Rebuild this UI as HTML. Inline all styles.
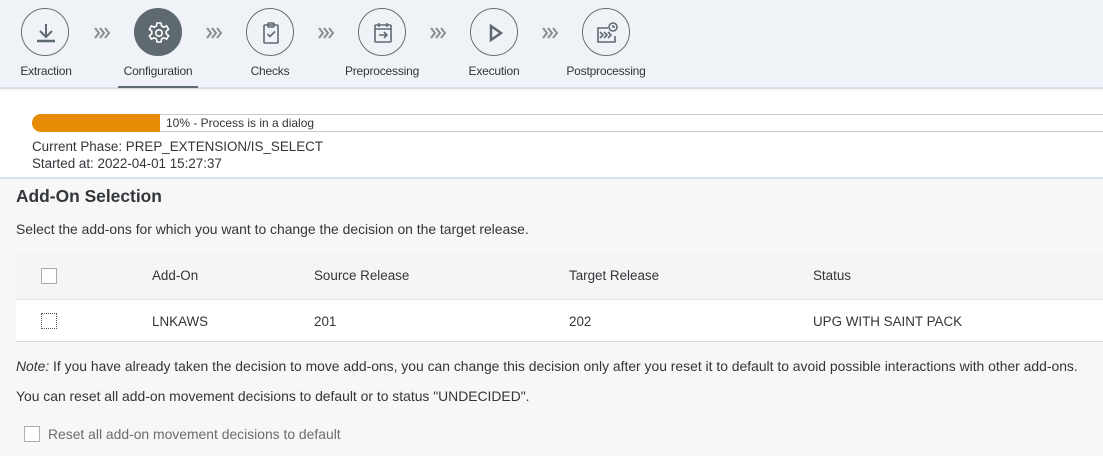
<!DOCTYPE html>
<html><head><meta charset="utf-8"><style>
*{margin:0;padding:0;box-sizing:border-box}
body{width:1103px;height:456px;overflow:hidden;font-family:"Liberation Sans",sans-serif;color:#32363a;background:#f7f7f7;position:relative}
.nav{position:absolute;left:0;top:0;width:1103px;height:89px;background:#eff3f7;border-bottom:2px solid #d9e2ea}
.c{position:absolute;top:8px;width:48px;height:48px;border-radius:50%;border:1px solid #6a6d70;background:transparent}
.c svg{position:absolute;left:11px;top:11px}
.c.on{background:#5f6a70;border-color:#5f6a70}
.lbl{position:absolute;top:64px;font-size:12px;color:#32363a;width:120px;text-align:center;letter-spacing:-0.2px}
.chev{position:absolute;top:27px}
.ul{position:absolute;left:118px;top:86px;width:80px;height:2px;background:#5f6a70}
.prog{position:absolute;left:0;top:91px;width:1103px;height:88px;background:#fff;border-bottom:2px solid #d9e2ea}
.bar{position:absolute;left:32px;top:23px;width:1080px;height:18px;border:1px solid #c8c8c8;border-left:none;border-radius:9px 0 0 9px;background:#fff}
.fill{position:absolute;left:0;top:-1px;width:128px;height:18px;background:#e78c07;border-radius:9px 0 0 9px}
.bt{position:absolute;left:134px;top:1px;font-size:12px;color:#32363a}
.t13{font-size:13.4px;position:absolute}
.t14{font-size:13.9px;position:absolute}
h2{position:absolute;left:16px;top:186px;font-size:17.4px;font-weight:bold;color:#32363a}
.tbl{position:absolute;left:16px;top:252px;width:1087px}
.th{height:48px;background:#f5f5f5;border-bottom:1px solid #e5e5e5;position:relative}
.tr{height:42px;background:#fff;border-bottom:1px solid #d9d9d9;position:relative}
.cell{position:absolute;font-size:13.4px}
.cb{position:absolute;width:16px;height:16px;border:1px solid #aaa;background:#fff}
</style></head><body>
<div class="nav">
 <div class="c" style="left:21px"><svg width="26" height="26" viewBox="0 0 26 26" fill="none" stroke="#5f6a70" stroke-width="2"><path d="M13 4v13M7 11l6 6 6-6"/><path d="M4 21h18" stroke-width="2.5"/></svg></div>
 <div class="c on" style="left:134px"><svg width="26" height="26" viewBox="0 0 26 26" fill="none" stroke="#fff" stroke-width="1.6"><path d="M11 3h4l.6 3 2.2 1.2 2.8-1.3 2 3.4-2.4 2v2.4l2.4 2-2 3.4-2.8-1.3-2.2 1.2-.6 3h-4l-.6-3-2.2-1.2-2.8 1.3-2-3.4 2.4-2v-2.4l-2.4-2 2-3.4 2.8 1.3L10.4 6z"/><circle cx="13" cy="13" r="3.2"/></svg></div>
 <div class="c" style="left:246px"><svg width="26" height="26" viewBox="0 0 26 26" fill="none" stroke="#5f6a70" stroke-width="1.6"><rect x="6" y="5" width="14" height="18" rx="1"/><rect x="10" y="3" width="6" height="4" rx="1"/><path d="M9.5 14l2.5 2.5 5-5"/></svg></div>
 <div class="c" style="left:358px"><svg width="26" height="26" viewBox="0 0 26 26" fill="none" stroke="#5f6a70" stroke-width="1.6"><rect x="5" y="5" width="16" height="17" rx="1"/><path d="M5 9h16M9 3v4M17 3v4M9 15h8M14 12l3 3-3 3"/></svg></div>
 <div class="c" style="left:470px"><svg width="26" height="26" viewBox="0 0 26 26" fill="none" stroke="#5f6a70" stroke-width="2.5"><path d="M9 6l10 7-10 7z"/></svg></div>
 <div class="c" style="left:582px"><svg width="26" height="26" viewBox="0 0 26 26" fill="none" stroke="#5f6a70" stroke-width="1.6"><path d="M14 8H4v14h17v-6"/><circle cx="19" cy="7" r="4"/><path d="M19 5v2h2M6 12l3 3-3 3M10 12l3 3-3 3M14 12l3 3-3 3"/></svg></div>
 <svg class="chev" style="left:94px" width="16" height="12" viewBox="0 0 16 12" fill="none" stroke="#8a8d90" stroke-width="2"><path d="M1 1l4 5-4 5M6 1l4 5-4 5M11 1l4 5-4 5"/></svg>
 <svg class="chev" style="left:206px" width="16" height="12" viewBox="0 0 16 12" fill="none" stroke="#8a8d90" stroke-width="2"><path d="M1 1l4 5-4 5M6 1l4 5-4 5M11 1l4 5-4 5"/></svg>
 <svg class="chev" style="left:318px" width="16" height="12" viewBox="0 0 16 12" fill="none" stroke="#8a8d90" stroke-width="2"><path d="M1 1l4 5-4 5M6 1l4 5-4 5M11 1l4 5-4 5"/></svg>
 <svg class="chev" style="left:430px" width="16" height="12" viewBox="0 0 16 12" fill="none" stroke="#8a8d90" stroke-width="2"><path d="M1 1l4 5-4 5M6 1l4 5-4 5M11 1l4 5-4 5"/></svg>
 <svg class="chev" style="left:542px" width="16" height="12" viewBox="0 0 16 12" fill="none" stroke="#8a8d90" stroke-width="2"><path d="M1 1l4 5-4 5M6 1l4 5-4 5M11 1l4 5-4 5"/></svg>
 <div class="lbl" style="left:-14px">Extraction</div>
 <div class="lbl" style="left:98px">Configuration</div>
 <div class="lbl" style="left:210px">Checks</div>
 <div class="lbl" style="left:322px">Preprocessing</div>
 <div class="lbl" style="left:434px">Execution</div>
 <div class="lbl" style="left:546px">Postprocessing</div>
 <div class="ul"></div>
</div>
<div class="prog">
 <div class="bar"><div class="fill"></div><div class="bt">10% - Process is in a dialog</div></div>
 <div class="t13" style="left:32px;top:48px">Current Phase: PREP_EXTENSION/IS_SELECT</div>
 <div class="t13" style="left:32px;top:65px">Started at: 2022-04-01 15:27:37</div>
</div>
<h2>Add-On Selection</h2>
<div class="t14" style="left:16px;top:221px">Select the add-ons for which you want to change the decision on the target release.</div>
<div class="tbl">
 <div class="th">
  <div class="cb" style="left:25px;top:16px"></div>
  <div class="cell" style="left:136px;top:16px">Add-On</div>
  <div class="cell" style="left:298px;top:16px">Source Release</div>
  <div class="cell" style="left:553px;top:16px">Target Release</div>
  <div class="cell" style="left:797px;top:16px">Status</div>
 </div>
 <div class="tr">
  <div class="cb" style="left:25px;top:13px;border:1px dotted #555"></div>
  <div class="cell" style="left:136px;top:14px">LNKAWS</div>
  <div class="cell" style="left:298px;top:14px">201</div>
  <div class="cell" style="left:553px;top:14px">202</div>
  <div class="cell" style="left:797px;top:14px">UPG WITH SAINT PACK</div>
 </div>
</div>
<div class="t14" style="left:16px;top:358px"><i>Note:</i> If you have already taken the decision to move add-ons, you can change this decision only after you reset it to default to avoid possible interactions with other add-ons.</div>
<div class="t14" style="left:16px;top:388px">You can reset all add-on movement decisions to default or to status "UNDECIDED".</div>
<div class="cb" style="left:24px;top:426px;border-color:#b0b0b0"></div>
<div class="t14" style="left:48px;top:426px;color:#6a6d70">Reset all add-on movement decisions to default</div>
</body></html>
